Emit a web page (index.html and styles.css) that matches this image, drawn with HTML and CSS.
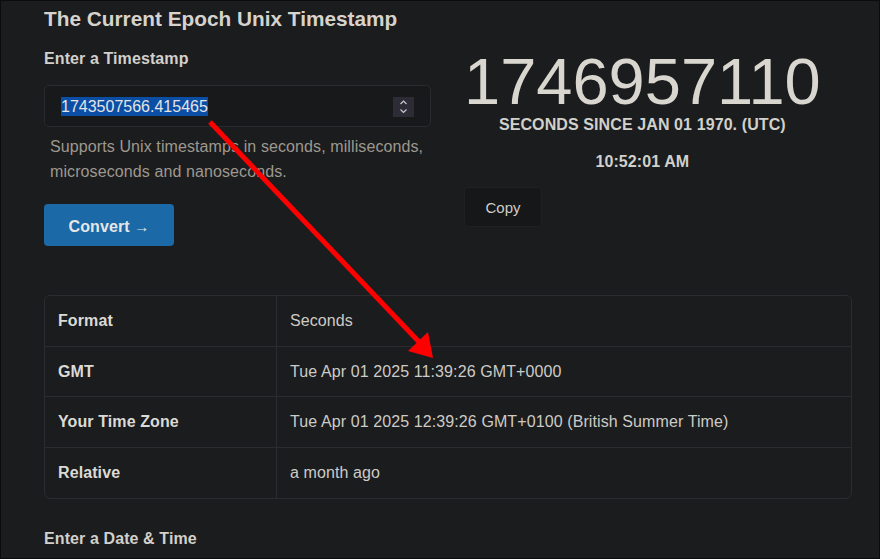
FILE: index.html
```html
<!DOCTYPE html>
<html lang="en">
<head>
<meta charset="utf-8">
<title>Epoch Converter</title>
<link rel="stylesheet" href="styles.css">
</head>
<body>
<main class="page">
  <h1 class="title">The Current Epoch Unix Timestamp</h1>
  <div class="top-row">
    <section class="left-col">
      <h2 class="label">Enter a Timestamp</h2>
      <div class="input-box">
        <span class="input-value"><span class="selected">1743507566.415465</span></span>
        <span class="spinner">
          <svg width="21" height="20" viewBox="0 0 21 20"><path d="M7.5 7 L10.5 4 L13.5 7" fill="none" stroke="#c9c8d0" stroke-width="1.2"/><path d="M7.5 12.5 L10.5 15.5 L13.5 12.5" fill="none" stroke="#c9c8d0" stroke-width="1.2"/></svg>
        </span>
      </div>
      <p class="helper">Supports Unix timestamps in seconds, milliseconds, microseconds and nanoseconds.</p>
      <button class="convert">Convert <span class="arrow-glyph">→</span></button>
    </section>
    <section class="right-col">
      <div class="big-number">1746957110</div>
      <div class="since">SECONDS SINCE JAN 01 1970. (UTC)</div>
      <div class="clock">10:52:01 AM</div>
      <button class="copy">Copy</button>
    </section>
  </div>
  <div class="result-table">
    <div class="row"><div class="cell key">Format</div><div class="cell val">Seconds</div></div>
    <div class="row"><div class="cell key">GMT</div><div class="cell val">Tue Apr 01 2025 11:39:26 GMT+0000</div></div>
    <div class="row"><div class="cell key">Your Time Zone</div><div class="cell val">Tue Apr 01 2025 12:39:26 GMT+0100 (British Summer Time)</div></div>
    <div class="row"><div class="cell key">Relative</div><div class="cell val">a month ago</div></div>
  </div>
  <h2 class="label date-label">Enter a Date &amp; Time</h2>
</main>
<svg class="annotation" width="880" height="559" viewBox="0 0 880 559">
  <line x1="210" y1="122" x2="421" y2="344" stroke="#ff0000" stroke-width="5"/>
  <polygon points="408,351 433,358 428,332" fill="#ff0000"/>
</svg>
</body>
</html>
```
FILE: styles.css
```css
* { box-sizing: border-box; }
html, body { margin: 0; padding: 0; }
body {
  width: 880px;
  height: 559px;
  overflow: hidden;
  background: #1b1c1e;
  border: 1px solid #0c0c0d;
  font-family: "Liberation Sans", Arial, sans-serif;
  letter-spacing: 0.1px;
  color: #d6d3cd;
  position: relative;
}
.page {
  padding: 0 28px 0 43px;
}
.title {
  margin: 7px 0 0;
  font-size: 20.8px;
  line-height: 22px;
  font-weight: bold;
  letter-spacing: 0;
  color: #d6d3cd;
}
.top-row {
  display: flex;
  gap: 33px;
  align-items: flex-start;
}
.left-col {
  width: 387px;
  flex-shrink: 0;
}
.label {
  margin: 19px 0 0;
  font-size: 16px;
  line-height: 20px;
  font-weight: bold;
  color: #d2d0cb;
}
.input-box {
  margin-top: 16px;
  height: 42px;
  border: 1px solid #2a2b2e;
  border-radius: 5px;
  background: #18191b;
  display: flex;
  align-items: center;
  justify-content: space-between;
  padding: 1px 16px 0 16px;
}
.input-value {
  font-size: 16px;
  line-height: 19px;
  color: #e4e4e4;
}
.selected {
  background: #0b4ea6;
  display: inline-block;
  line-height: 19px;
  letter-spacing: 0;
}
.spinner {
  flex-shrink: 0;
  width: 21px;
  height: 20px;
  background: #2d2c36;
  display: block;
}
.spinner svg { display: block; }
.helper {
  margin: 7px 0 0;
  padding-left: 6px;
  font-size: 16px;
  line-height: 25px;
  color: #9e988e;
}
.convert {
  margin-top: 20px;
  width: 130px;
  height: 42px;
  border: none;
  border-radius: 4px;
  background: #1b69a6;
  color: #e6e6e6;
  font-family: "Liberation Sans", Arial, sans-serif;
  font-weight: bold;
  font-size: 16px;
  letter-spacing: 0.1px;
  padding: 3px 0 0;
}
.arrow-glyph { font-weight: normal; font-size: 15px; }
.right-col {
  display: flex;
  flex-direction: column;
  align-items: center;
  text-align: center;
}
.big-number {
  margin-top: 23px;
  font-size: 65px;
  line-height: 58px;
  letter-spacing: 0;
  color: #d9d6cf;
}
.since {
  margin-top: 4px;
  font-size: 16px;
  line-height: 20px;
  font-weight: bold;
  color: #d2d0cb;
}
.clock {
  margin-top: 17px;
  font-size: 16px;
  line-height: 20px;
  font-weight: bold;
  color: #d2d0cb;
}
.copy {
  align-self: flex-start;
  margin-top: 15px;
  width: 78px;
  height: 40px;
  background: #161718;
  border: 1px solid #1f2022;
  border-radius: 4px;
  color: #cfcdc8;
  font-family: "Liberation Sans", Arial, sans-serif;
  font-size: 15px;
  padding: 0;
}
.result-table {
  margin-top: 49px;
  width: 808px;
  border: 1px solid #2b2c2f;
  border-radius: 6px;
}
.row {
  display: flex;
  height: 50.5px;
  border-bottom: 1px solid #2b2c2f;
}
.row:last-child { border-bottom: none; height: 50px; }
.cell {
  display: flex;
  align-items: center;
  padding-left: 13px;
  padding-top: 1px;
  font-size: 16px;
}
.key {
  width: 232px;
  border-right: 1px solid #2b2c2f;
  font-weight: bold;
  color: #dcdad5;
}
.val {
  flex: 1;
  color: #cdcbc6;
}
.date-label {
  margin-top: 30px;
}
.annotation {
  position: absolute;
  left: -1px;
  top: -1px;
  pointer-events: none;
}
```
